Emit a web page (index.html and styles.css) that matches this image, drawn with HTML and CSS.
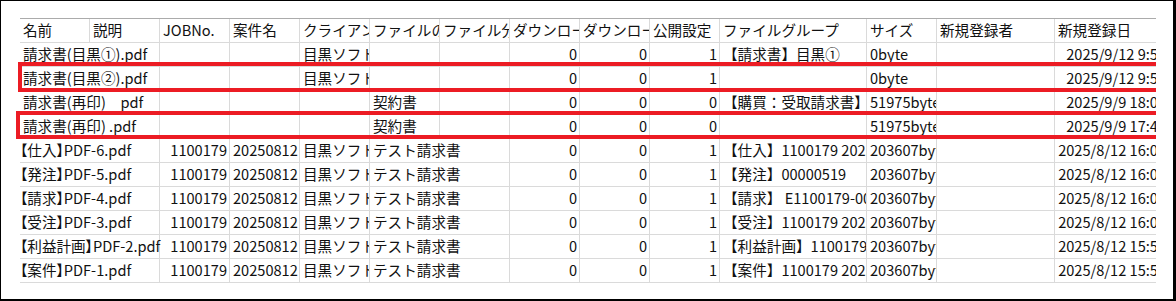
FILE: index.html
```html
<!DOCTYPE html>
<html lang="ja">
<head>
<meta charset="utf-8">
<title>ファイル一覧</title>
<link rel="stylesheet" href="styles.css">
</head>
<body>
<div class="frame">
  <div class="sheet">
    <div class="row head">
      <div class="c">名前</div><div class="c">説明</div><div class="c">JOBNo.</div><div class="c">案件名</div><div class="c">クライアント</div><div class="c">ファイルの説明</div><div class="c">ファイル分類</div><div class="c">ダウンロード数</div><div class="c">ダウンロード日</div><div class="c">公開設定</div><div class="c">ファイルグループ</div><div class="c">サイズ</div><div class="c">新規登録者</div><div class="c last">新規登録日</div>
    </div>
    <div class="row">
      <div class="c s2">請求書(目黒①).pdf</div><div class="c"></div><div class="c"></div><div class="c">目黒ソフトウェア</div><div class="c"></div><div class="c"></div><div class="c n">0</div><div class="c n">0</div><div class="c n">1</div><div class="c">【請求書】目黒①</div><div class="c">0byte</div><div class="c"></div><div class="c last n">2025/9/12 9:55</div>
    </div>
    <div class="row">
      <div class="c s2">請求書(目黒②).pdf</div><div class="c"></div><div class="c"></div><div class="c">目黒ソフトウェア</div><div class="c"></div><div class="c"></div><div class="c n">0</div><div class="c n">0</div><div class="c n">1</div><div class="c"></div><div class="c">0byte</div><div class="c"></div><div class="c last n">2025/9/12 9:55</div>
    </div>
    <div class="row">
      <div class="c s2">請求書(再印)　pdf</div><div class="c"></div><div class="c"></div><div class="c"></div><div class="c">契約書</div><div class="c"></div><div class="c n">0</div><div class="c n">0</div><div class="c n">0</div><div class="c">【購買：受取請求書】</div><div class="c">51975byte</div><div class="c"></div><div class="c last n">2025/9/9 18:02</div>
    </div>
    <div class="row">
      <div class="c s2">請求書(再印) .pdf</div><div class="c"></div><div class="c"></div><div class="c"></div><div class="c">契約書</div><div class="c"></div><div class="c n">0</div><div class="c n">0</div><div class="c n">0</div><div class="c"></div><div class="c">51975byte</div><div class="c"></div><div class="c last n">2025/9/9 17:42</div>
    </div>
    <div class="row">
      <div class="c s2 br">【仕入】PDF-6.pdf</div><div class="c n">1100179</div><div class="c">20250812</div><div class="c">目黒ソフトウェア</div><div class="c s2">テスト請求書</div><div class="c n">0</div><div class="c n">0</div><div class="c n">1</div><div class="c">【仕入】1100179 20250812</div><div class="c">203607byte</div><div class="c"></div><div class="c last n">2025/8/12 16:05</div>
    </div>
    <div class="row">
      <div class="c s2 br">【発注】PDF-5.pdf</div><div class="c n">1100179</div><div class="c">20250812</div><div class="c">目黒ソフトウェア</div><div class="c s2">テスト請求書</div><div class="c n">0</div><div class="c n">0</div><div class="c n">1</div><div class="c">【発注】00000519</div><div class="c">203607byte</div><div class="c"></div><div class="c last n">2025/8/12 16:04</div>
    </div>
    <div class="row">
      <div class="c s2 br">【請求】PDF-4.pdf</div><div class="c n">1100179</div><div class="c">20250812</div><div class="c">目黒ソフトウェア</div><div class="c s2">テスト請求書</div><div class="c n">0</div><div class="c n">0</div><div class="c n">1</div><div class="c">【請求】 E1100179-001</div><div class="c">203607byte</div><div class="c"></div><div class="c last n">2025/8/12 16:03</div>
    </div>
    <div class="row">
      <div class="c s2 br">【受注】PDF-3.pdf</div><div class="c n">1100179</div><div class="c">20250812</div><div class="c">目黒ソフトウェア</div><div class="c s2">テスト請求書</div><div class="c n">0</div><div class="c n">0</div><div class="c n">1</div><div class="c">【受注】1100179 20250812</div><div class="c">203607byte</div><div class="c"></div><div class="c last n">2025/8/12 16:01</div>
    </div>
    <div class="row">
      <div class="c s2 br wide">【利益計画】PDF-2.pdf</div><div class="c n">1100179</div><div class="c">20250812</div><div class="c">目黒ソフトウェア</div><div class="c s2">テスト請求書</div><div class="c n">0</div><div class="c n">0</div><div class="c n">1</div><div class="c">【利益計画】1100179</div><div class="c">203607byte</div><div class="c"></div><div class="c last n">2025/8/12 15:59</div>
    </div>
    <div class="row">
      <div class="c s2 br">【案件】PDF-1.pdf</div><div class="c n">1100179</div><div class="c">20250812</div><div class="c">目黒ソフトウェア</div><div class="c s2">テスト請求書</div><div class="c n">0</div><div class="c n">0</div><div class="c n">1</div><div class="c">【案件】1100179 20250812</div><div class="c">203607byte</div><div class="c"></div><div class="c last n">2025/8/12 15:57</div>
    </div>
  </div>
  <div class="mark mark-1"></div>
  <div class="mark mark-2"></div>
</div>
</body>
</html>
```
FILE: styles.css
```css
html, body {
  margin: 0;
  padding: 0;
  background: #ffffff;
}

.frame {
  position: relative;
  box-sizing: border-box;
  width: 1176px;
  height: 301px;
  border-style: solid;
  border-color: #000000;
  border-width: 1px 3px 2px 1px;
  padding: 17px 0 0 19px;
  background: #ffffff;
}

.sheet {
  width: 1136px;
  overflow: hidden;
  border-top: 1px solid #ababab;
  font-family: "Noto Sans CJK JP", "Noto Sans", sans-serif;
  font-size: 14.6px;
  color: #111111;
}

.row {
  display: grid;
  grid-template-columns: repeat(10, 70px) 147px 70px 118px 160px;
  height: 24px;
}

.c {
  box-sizing: border-box;
  height: 24px;
  border-right: 1px solid #dadada;
  border-bottom: 1px solid #dadada;
  padding: 0 1px 0 3px;
  line-height: 22px;
  white-space: nowrap;
  overflow: hidden;
}

.c.n {
  text-align: right;
  padding-right: 2px;
}

.c.s2 {
  grid-column: span 2;
}

.c.br {
  font-feature-settings: "palt";
  padding-left: 0;
}

.c.wide {
  overflow: visible;
}

.c.last {
  border-right: none;
  padding-right: 49px;
}

.head .c.last {
  padding-right: 1px;
}

.mark {
  position: absolute;
  box-sizing: border-box;
  border: 4px solid #ec1c24;
  border-right: none;
}

.mark-1 {
  left: 17px;
  top: 61px;
  width: 1138px;
  height: 30px;
}

.mark-2 {
  left: 15px;
  top: 110px;
  width: 1140px;
  height: 28px;
}
```
